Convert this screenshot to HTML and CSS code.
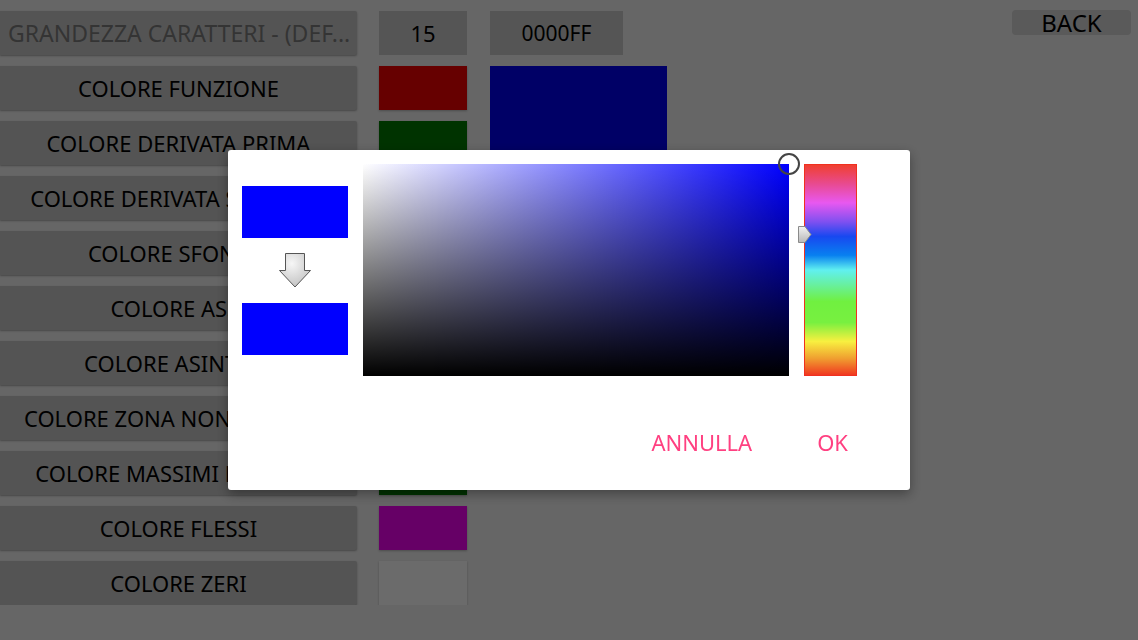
FILE: index.html
```html
<!DOCTYPE html>
<html lang="it">
<head>
    <meta charset="UTF-8">
    <meta name="viewport" content="width=device-width, initial-scale=1.0">
    <title>Impostazioni colori</title>
    <link rel="stylesheet" href="styles.css">
</head>
<body>
    <div class="page">
        <div class="settings">
            <div class="label disabled">GRANDEZZA CARATTERI - (DEF...</div>
            <div class="value">15</div>
            <div class="value hex">0000FF</div>

            <div class="label">COLORE FUNZIONE</div>
            <div class="swatch red"></div>
            <div class="big-preview"></div>

            <div class="label">COLORE DERIVATA PRIMA</div>
            <div class="swatch green"></div>

            <div class="label">COLORE DERIVATA SECONDA</div>
            <div class="swatch blue"></div>

            <div class="label">COLORE SFONDO</div>
            <div class="swatch white"></div>

            <div class="label">COLORE ASSI</div>
            <div class="swatch black"></div>

            <div class="label">COLORE ASINTOTI</div>
            <div class="swatch orange"></div>

            <div class="label">COLORE ZONA NON DEFINITA</div>
            <div class="swatch grey"></div>

            <div class="label">COLORE MASSIMI E MINIMI</div>
            <div class="swatch green"></div>

            <div class="label">COLORE FLESSI</div>
            <div class="swatch purple"></div>

            <div class="label">COLORE ZERI</div>
            <div class="swatch light"></div>
        </div>

        <button class="back">BACK</button>
    </div>

    <div class="overlay">
        <div class="dialog">
            <div class="picker">
                <div class="preview-col">
                    <div class="preview-swatch"></div>
                    <svg class="arrow" width="32" height="35" viewBox="0 0 32 35">
                        <defs>
                            <radialGradient id="arrowFill" cx="0.4" cy="0.3" r="0.8">
                                <stop offset="0" stop-color="#f6f6f6"/>
                                <stop offset="1" stop-color="#bdbdbd"/>
                            </radialGradient>
                        </defs>
                        <path d="M6.5 0.5 H25.5 V17.5 H31.5 L16 34 L0.5 17.5 H6.5 Z" fill="url(#arrowFill)" stroke="#555" stroke-width="1"/>
                    </svg>
                    <div class="preview-swatch"></div>
                </div>
                <div class="sv-box">
                    <span class="sv-cursor"></span>
                </div>
                <div class="hue-box">
                    <svg class="hue-handle" width="14" height="17" viewBox="0 0 14 17">
                        <defs>
                            <linearGradient id="handleFill" x1="0" y1="0" x2="0" y2="1">
                                <stop offset="0" stop-color="#f2f2f2"/>
                                <stop offset="1" stop-color="#b8b8b8"/>
                            </linearGradient>
                        </defs>
                        <path d="M0.5 0.5 H7 L13 8.5 L7 16.5 H0.5 Z" fill="url(#handleFill)" stroke="#8a8a8a" stroke-width="1"/>
                    </svg>
                </div>
            </div>
            <div class="actions">
                <button class="action">ANNULLA</button>
                <button class="action">OK</button>
            </div>
        </div>
    </div>
</body>
</html>
```

FILE: styles.css
```css
body {
    margin: 0;
    background-color: #cccccc;
    font-family: "Noto Sans", "DejaVu Sans", sans-serif;
}
.page {
    display: flex;
    align-items: flex-start;
}
.settings {
    display: grid;
    grid-template-columns: 357px 89px auto;
    grid-auto-rows: 44px;
    column-gap: 22px;
    row-gap: 11px;
    padding-top: 11px;
}
.label {
    grid-column: 1;
    display: flex;
    align-items: center;
    justify-content: center;
    background-color: #a8a8a8;
    border-radius: 0 2px 2px 0;
    box-shadow: 0 1px 2px rgba(0, 0, 0, 0.3);
    font-size: 22px;
    color: #000;
    white-space: nowrap;
    overflow: hidden;
}
.label.disabled {
    justify-content: flex-start;
    padding-left: 8px;
    font-size: 23px;
    color: #686868;
}
.value {
    display: flex;
    align-items: center;
    justify-content: center;
    background-color: #aaaaaa;
    font-size: 22px;
    width: 88px;
}
.value.hex {
    width: 133px;
    font-size: 21px;
}
.swatch {
    grid-column: 2;
    width: 88px;
    box-shadow: 0 1px 2px rgba(0, 0, 0, 0.25);
}
.big-preview {
    grid-column: 3;
    grid-row: 2 / span 2;
    width: 177px;
    background-color: #0000cc;
}
.red { background-color: #cc0000; }
.green { background-color: #006600; }
.blue { background-color: #0000cc; }
.white { background-color: #ffffff; }
.black { background-color: #000000; }
.orange { background-color: #cc6600; }
.grey { background-color: #888888; }
.purple { background-color: #cc00cc; }
.light { background-color: #d6d6d6; }

.back {
    margin: 10px 7px 0 auto;
    width: 119px;
    height: 25px;
    padding: 0;
    border: none;
    border-radius: 4px;
    background-color: #b4b4b4;
    font-family: inherit;
    font-size: 24px;
    line-height: 25px;
    color: #000;
}

.overlay {
    position: fixed;
    inset: 0;
    background-color: rgba(0, 0, 0, 0.5);
    display: flex;
    align-items: center;
    justify-content: center;
}
.dialog {
    width: 682px;
    box-sizing: border-box;
    padding: 14px 14px 24px;
    background-color: #fff;
    border-radius: 3px;
    box-shadow: 0 4px 12px rgba(0, 0, 0, 0.35);
}
.picker {
    display: flex;
    align-items: center;
}
.preview-col {
    width: 106px;
    display: flex;
    flex-direction: column;
    align-items: center;
    gap: 15px;
}
.preview-swatch {
    width: 106px;
    height: 52px;
    background-color: #0000ff;
}
.arrow {
    display: block;
}
.sv-box {
    position: relative;
    margin-left: 15px;
    width: 426px;
    height: 212px;
    background: linear-gradient(to bottom, rgba(0, 0, 0, 0), #000),
                linear-gradient(to right, #fff, #0000ff);
}
.sv-cursor {
    position: absolute;
    right: -11px;
    top: -11px;
    width: 22px;
    height: 22px;
    box-sizing: border-box;
    border: 2px solid #444;
    border-radius: 50%;
}
.hue-box {
    position: relative;
    margin-left: 15px;
    width: 53px;
    height: 212px;
    box-sizing: border-box;
    border: 1px solid #f03020;
    background: linear-gradient(to bottom,
        #f04030 0%,
        #e84a90 9%,
        #e858f0 18%,
        #8050f0 27%,
        #1848f0 34%,
        #0880f0 43%,
        #60f0f0 50%,
        #68f0a0 57%,
        #70f040 65%,
        #78f040 75%,
        #f8f040 84%,
        #f0a030 92%,
        #f03820 100%);
}
.hue-handle {
    position: absolute;
    left: -7px;
    top: 61px;
}
.actions {
    display: flex;
    justify-content: flex-end;
    gap: 33px;
    margin-top: 42px;
    padding-right: 32px;
}
.action {
    height: 48px;
    padding: 0 16px;
    border: none;
    background: none;
    font-family: inherit;
    font-size: 22px;
    color: #ff4081;
}
```
